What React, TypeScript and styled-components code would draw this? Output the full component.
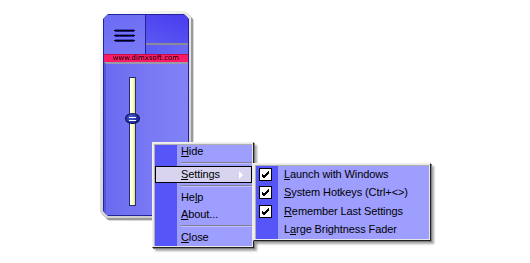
import * as React from 'react';
import styled, {createGlobalStyle} from 'styled-components'

const Global = createGlobalStyle`
  html, body {
    margin: 0;
    padding: 0;
    background: #ffffff;
  }
  body {
    font-family: "Liberation Sans", Arial, sans-serif;
  }
`

const Desktop = styled.div`
  position: relative;
  width: 530px;
  height: 263px;
  overflow: hidden;
  background: #ffffff;
`

// ---- the fader widget ----

const WidgetShadow = styled.div`
  position: absolute;
  left: 100px;
  top: 11px;
  filter: drop-shadow(2px 2px 0 #9a9a9a) drop-shadow(1px 1px 0 #d8d8d8);
`
const Frame = styled.div`
  width: 91px;
  height: 207px;
  box-sizing: border-box;
  padding: 3px 2px 2px 3px;
  background: linear-gradient(135deg, #ffffff 0%, #e4e4e4 40%, #c4c4c4 100%);
  clip-path: polygon(6px 0, calc(100% - 6px) 0, 100% 6px, 100% 100%, 6px 100%, 0 calc(100% - 6px), 0 6px);
`
const Panel = styled.div`
  width: 100%;
  height: 100%;
  box-sizing: border-box;
  background: #23239a;
  padding: 1px;
  clip-path: polygon(5px 0, calc(100% - 5px) 0, 100% 5px, 100% 100%, 5px 100%, 0 calc(100% - 5px), 0 5px);
  display: grid;
  grid-template-columns: 41px 1fr;
  grid-template-rows: 39px 8px 1fr;
  column-gap: 1px;
`
const MenuButton = styled.div`
  background: linear-gradient(160deg, #6b6bf4 0%, #7a7af6 100%);
  display: flex;
  align-items: center;
  justify-content: center;
  padding-top: 1px;
`
const RightBox = styled.div`
  display: grid;
  grid-template-rows: 1fr 2px 9px;
`
const Tile = styled.div<{dark?: boolean}>`
  background: ${(p) => p.dark
    ? 'linear-gradient(200deg, #4a3cee 0%, #5a58f2 100%)'
    : 'linear-gradient(90deg, #5c5cf2 0%, #6a6af4 100%)'};
`
const Divider = styled.div`
  background: #8c8c98;
`
const UrlBar = styled.div`
  grid-column: 1 / 3;
  background: #ff1a66;
  border-top: 1px solid #c0104a;
  color: #000;
  font-family: "DejaVu Sans", sans-serif;
  font-size: 7px;
  line-height: 7px;
  text-align: center;
`
const SliderArea = styled.div`
  grid-column: 1 / 3;
  background: linear-gradient(90deg, #6a6af0 0%, #7878f4 50%, #8282f6 100%);
  border-left: 2px solid #5656de;
  border-top: 2px solid #9a9aa8;
  display: flex;
  padding: 13px 0 9px 23px;
`
const Track = styled.div`
  width: 5px;
  border: 1px solid #1e3070;
  background: linear-gradient(90deg, #fffff4 0%, #ffffc8 55%, #e0e090 100%);
  position: relative;
`
const Knob = styled.div`
  position: absolute;
  left: -5px;
  top: 35px;
  width: 15px;
  height: 11px;
  border-radius: 50%;
  background: radial-gradient(circle at 40% 35%, #5060d0 0%, #2030a8 60%, #101870 100%);
  border: 1px solid #0a1050;
  box-sizing: border-box;
  display: flex;
  flex-direction: column;
  align-items: center;
  justify-content: center;
  gap: 2px;
`
const KnobLine = styled.span`
  width: 7px;
  height: 1px;
  background: #ffffff;
`

const Hamburger = () => (
  <svg width="21" height="13" viewBox="0 0 21 13" shapeRendering="crispEdges">
    {[0, 5, 10].map((y) => (
      <g key={y}>
        <rect x="1" y={y} width="19" height="1" fill="#4040c0"/>
        <rect x="0" y={y + 1} width="21" height="1" fill="#000"/>
        <rect x="1" y={y + 2} width="19" height="1" fill="#1c1c90"/>
      </g>
    ))}
  </svg>
)

// ---- menus ----

const Menu = styled.div`
  position: absolute;
  box-sizing: border-box;
  border-top: 1px solid #f0f0f0;
  border-left: 1px solid #f0f0f0;
  border-right: 1px solid #202020;
  border-bottom: 1px solid #202020;
  padding: 1px;
  background: #e8e8e8;
  box-shadow: 1px 1px 0 #808080, 3px 3px 2px rgba(0, 0, 0, 0.35);
  font-size: 11px;
  color: #000;
`
const MenuBody = styled.div<{strip: number}>`
  height: 100%;
  display: flex;
  flex-direction: column;
  background: linear-gradient(90deg, #5656f8 ${(p) => p.strip}px, #9e9eff ${(p) => p.strip}px);
  border-top: 1px solid #b0b0b0;
  border-left: 1px solid #b0b0b0;
  box-sizing: border-box;
`
const Item = styled.div<{active?: boolean; h: number}>`
  height: ${(p) => p.h}px;
  flex: none;
  display: flex;
  align-items: center;
  box-sizing: border-box;
  position: relative;
  ${(p) => p.active && `
    background: #d8d4f0;
    border: 1px solid #000;
  `}
`
const Label = styled.span<{indent: number}>`
  padding-left: ${(p) => p.indent}px;
  margin-top: -2px;
  white-space: nowrap;
  letter-spacing: -0.1px;
  u {
    text-decoration: underline;
    text-underline-offset: 1px;
  }
`
const Separator = styled.div<{indent: number; h: number}>`
  height: ${(p) => p.h}px;
  flex: none;
  display: flex;
  align-items: center;
  padding-left: ${(p) => p.indent}px;
  &::after {
    content: '';
    flex: 1;
    height: 2px;
    border-top: 1px solid #808090;
    border-bottom: 1px solid #c0c0ff;
    box-sizing: border-box;
  }
`
const Arrow = styled.span`
  position: absolute;
  right: 8px;
  top: 4px;
  width: 0;
  height: 0;
  border-top: 4px solid transparent;
  border-bottom: 4px solid transparent;
  border-left: 4px solid #ffffff;
`
const CheckBox = styled.span`
  position: absolute;
  left: 3px;
  top: 2px;
  width: 13px;
  height: 13px;
  box-sizing: border-box;
  border: 1px solid #000;
  background: #fff;
  display: flex;
  align-items: center;
  justify-content: center;
`
const Check = () => (
  <svg width="9" height="9" viewBox="0 0 9 9">
    <path d="M1 4 L3 6 L8 1 M1 5 L3 7 L8 2 M1 6 L3 8 L8 3" stroke="#000" strokeWidth="1" fill="none" shapeRendering="crispEdges"/>
  </svg>
)

type MainEntry = {key: string; h: number} | {sep: number}

const mainItems: MainEntry[] = [
  {key: 'hide', h: 14}, {sep: 7},
  {key: 'settings', h: 17}, {sep: 6},
  {key: 'help', h: 17},
  {key: 'about', h: 17}, {sep: 6},
  {key: 'close', h: 18},
]

const renderMain = (key: string) => {
  switch (key) {
    case 'hide': return <><u>H</u>ide</>
    case 'settings': return <><u>S</u>ettings</>
    case 'help': return <>He<u>l</u>p</>
    case 'about': return <><u>A</u>bout...</>
    default: return <><u>C</u>lose</>
  }
}

const subItems = [
  {checked: true, label: <><u>L</u>aunch with Windows</>},
  {checked: true, label: <><u>S</u>ystem Hotkeys (Ctrl+&lt;&gt;)</>},
  {checked: true, label: <><u>R</u>emember Last Settings</>},
  {checked: false, label: <>L<u>a</u>rge Brightness Fader</>},
]

export default function App() {
  return (
    <Desktop>
      <Global/>
      <WidgetShadow>
        <Frame>
          <Panel>
            <MenuButton><Hamburger/></MenuButton>
            <RightBox>
              <Tile dark/>
              <Divider/>
              <Tile/>
            </RightBox>
            <UrlBar>www.dimxsoft.com</UrlBar>
            <SliderArea>
              <Track>
                <Knob><KnobLine/><KnobLine/></Knob>
              </Track>
            </SliderArea>
          </Panel>
        </Frame>
      </WidgetShadow>

      <Menu style={{left: 152, top: 142, width: 102, height: 106}}>
        <MenuBody strip={22}>
          {mainItems.map((e, i) => 'sep' in e
            ? <Separator key={i} indent={26} h={e.sep}/>
            : (
              <Item key={i} h={e.h} active={e.key === 'settings'}>
                <Label indent={e.key === 'settings' ? 25 : 26}>{renderMain(e.key)}</Label>
                {e.key === 'settings' && <Arrow/>}
              </Item>
            ))}
        </MenuBody>
      </Menu>

      <Menu style={{left: 253, top: 163, width: 178, height: 78}}>
        <MenuBody strip={22}>
          {subItems.map((s, i) => (
            <Item key={i} h={18.3}>
              {s.checked && <CheckBox><Check/></CheckBox>}
              <Label indent={28}>{s.label}</Label>
            </Item>
          ))}
        </MenuBody>
      </Menu>
    </Desktop>
  )
}
